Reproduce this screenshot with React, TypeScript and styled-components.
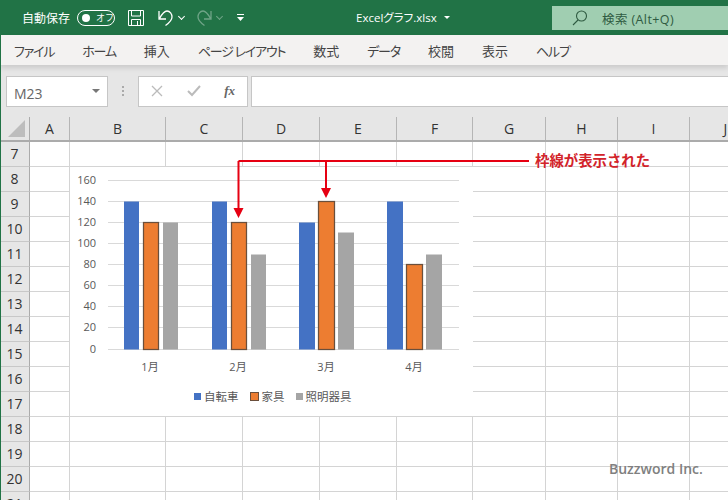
import React from "react";
import styled, { createGlobalStyle } from "styled-components";

const COLUMNS = [
  { label: "A", width: 40 },
  { label: "B", width: 96 },
  { label: "C", width: 77 },
  { label: "D", width: 77 },
  { label: "E", width: 77 },
  { label: "F", width: 76 },
  { label: "G", width: 73 },
  { label: "H", width: 72 },
  { label: "I", width: 72 },
  { label: "J", width: 72 },
];
const ROWS = [7, 8, 9, 10, 11, 12, 13, 14, 15, 16, 17, 18, 19, 20, 21];
const MENU = [
  { label: "ファイル", kana: true },
  { label: "ホーム", kana: true },
  { label: "挿入", kana: false },
  { label: "ページ レイアウト", kana: true },
  { label: "数式", kana: false },
  { label: "データ", kana: true },
  { label: "校閲", kana: false },
  { label: "表示", kana: false },
  { label: "ヘルプ", kana: true },
];

const SERIES = [
  { name: "自転車", color: "#4472c4", values: [140, 140, 120, 140], xs: [124, 212, 299, 387], w: [15, 15, 16, 16] },
  { name: "家具", color: "#ed7d31", values: [120, 120, 140, 80], xs: [143.5, 231.5, 318.5, 406.5], w: [15, 15, 16, 16], outlined: true },
  { name: "照明器具", color: "#a5a5a5", values: [120, 90, 110, 90], xs: [163, 251, 338, 426], w: [15, 15, 16, 16] },
];
const MONTHS = [
  { label: "1月", x: 150 },
  { label: "2月", x: 238 },
  { label: "3月", x: 326 },
  { label: "4月", x: 414 },
];
const TICKS = [160, 140, 120, 100, 80, 60, 40, 20, 0];
const CHART_LEFT = 70;
const CHART_TOP = 167;
const yFor = (v: number) => Math.floor(349 - v * 1.055);

const App = () => (
  <Page>
    <GlobalStyle />
    <TitleBar>
      <AutoSave>自動保存</AutoSave>
      <Toggle>
        <ToggleKnob />
        <ToggleLabel>オフ</ToggleLabel>
      </Toggle>
      <QuickIcon $width={16}>
        <svg width="16" height="16" viewBox="0 0 16 16" fill="none" stroke="#fff" strokeWidth="1">
          <path d="M0.500 0.500h15v15h-15z" />
          <path d="M3.500 0.500v5.500h9v-5.500M3.500 15.500v-6h9v6M9.500 11v4.500" />
        </svg>
      </QuickIcon>
      <QuickIcon $width={16} $left={14}>
        <svg width="16" height="18" viewBox="0 0 16 18" fill="none" stroke="#fff" strokeWidth="1.300">
          <path d="M1 2v8h7M1.500 9.500C4 5 6 2 9 2c3 0 5 3 5 6 0 3-3 6-6.500 8.500" />
        </svg>
      </QuickIcon>
      <Chevron $dim={false} />
      <QuickIcon $width={16} $left={12} $dim>
        <svg width="16" height="18" viewBox="0 0 16 18" fill="none" stroke="#fff" strokeWidth="1.300">
          <path d="M15 2v8H8M14.500 9.500C12 5 10 2 7 2 4 2 2 5 2 8c0 3 3 6 6.500 8.500" />
        </svg>
      </QuickIcon>
      <Chevron $dim />
      <QuickIcon $width={8} $left={15}>
        <svg width="8" height="8" viewBox="0 0 8 8" fill="#fff">
          <path d="M0 0h7v1H0zM0 3h7L3.500 7z" />
        </svg>
      </QuickIcon>
      <FileName>
        Excelグラフ.xlsx
        <Caret />
      </FileName>
      <SearchBox>
        <svg width="16" height="16" viewBox="0 0 16 16" fill="none" stroke="#2f5b41" strokeWidth="1.100">
          <circle cx="9.500" cy="6" r="5" />
          <path d="M6 10L1 15" />
        </svg>
        <SearchText>検索 (Alt+Q)</SearchText>
      </SearchBox>
    </TitleBar>

    <MenuBar>
      {MENU.map((item) => (
        <MenuItem key={item.label} $kana={item.kana}>
          {item.label}
        </MenuItem>
      ))}
    </MenuBar>

    <FormulaBar>
      <NameBox>
        <NameText>M23</NameText>
        <NameCaret />
      </NameBox>
      <Dots>
        <i />
        <i />
        <i />
      </Dots>
      <FormulaButtons>
        <svg width="12" height="12" viewBox="0 0 12 12" stroke="#bbb" strokeWidth="1.300">
          <path d="M1 1l10 10M11 1L1 11" />
        </svg>
        <svg width="14" height="12" viewBox="0 0 14 12" fill="none" stroke="#bbb" strokeWidth="2">
          <path d="M1 6l4 4 8-9" />
        </svg>
        <FxLabel>fx</FxLabel>
      </FormulaButtons>
      <FormulaInput />
    </FormulaBar>

    <ColumnHeader>
      <Corner>
        <svg width="17" height="17" viewBox="0 0 17 17">
          <path d="M17 0v17H0z" fill="#bdbdbd" />
        </svg>
      </Corner>
      {COLUMNS.map((col) => (
        <ColumnCell key={col.label} $width={col.width}>
          {col.label}
        </ColumnCell>
      ))}
    </ColumnHeader>

    <Sheet>
      {ROWS.map((row) => (
        <Row key={row}>
          <RowHeader>{row}</RowHeader>
          {COLUMNS.map((col) => (
            <Cell key={col.label} $width={col.width} />
          ))}
        </Row>
      ))}

      <ChartArea>
        <svg width="403" height="249" viewBox={`${CHART_LEFT} ${CHART_TOP} 403 249`}>
          {TICKS.map((t) => (
            <g key={t}>
              <line x1="108" x2="459" y1={yFor(t) + 0.5} y2={yFor(t) + 0.5} stroke="#d9d9d9" strokeWidth="1" />
              <ChartText x="96" y={yFor(t) + 4} textAnchor="end">
                {t}
              </ChartText>
            </g>
          ))}
          {SERIES.map((s) =>
            s.values.map((v, i) => (
              <rect
                key={i}
                x={s.xs[i]}
                y={yFor(v) + 0.5}
                width={s.w[i]}
                height={349 - yFor(v)}
                fill={s.color}
                stroke={s.outlined ? "#6a4f3c" : "none"}
                strokeWidth={s.outlined ? 1.25 : 0}
              />
            ))
          )}
          {MONTHS.map((m) => (
            <ChartText key={m.label} x={m.x} y="371" textAnchor="middle">
              {m.label}
            </ChartText>
          ))}
        </svg>
        <Legend>
          {SERIES.map((s) => (
            <LegendItem key={s.name}>
              <LegendSwatch $color={s.color} $outlined={!!s.outlined} />
              {s.name}
            </LegendItem>
          ))}
        </Legend>
      </ChartArea>

      <Callout width="728" height="100" viewBox="0 142 728 100">
        <path d="M238.500 161H529M238.500 161V208M326 161V188" fill="none" stroke="#e60012" strokeWidth="2" />
        <path d="M233.500 208h10l-5 10zM321 188h10l-5 10z" fill="#e60012" />
      </Callout>
      <CalloutText>枠線が表示された</CalloutText>
      <Watermark>Buzzword Inc.</Watermark>
    </Sheet>
  </Page>
);

export default App;

const GlobalStyle = createGlobalStyle`
  html, body {
    margin: 0;
    padding: 0;
    background: #fff;
    overflow: hidden;
  }
`;

const Page = styled.div`
  position: relative;
  width: 728px;
  height: 500px;
  overflow: hidden;
  font-family: "Open Sans", "Noto Sans CJK JP", sans-serif;
  color: #444;

  &::after {
    content: "";
    position: absolute;
    left: 0;
    top: 0;
    width: 1px;
    height: 100%;
    background: #217346;
  }
`;

const TitleBar = styled.div`
  height: 35px;
  background: #217346;
  color: #fff;
  display: flex;
  align-items: center;
  padding-left: 22px;
  box-sizing: border-box;
`;

const AutoSave = styled.span`
  font-family: "Noto Sans CJK JP", sans-serif;
  font-size: 12px;
  width: 55px;
`;

const Toggle = styled.div`
  width: 36px;
  height: 14px;
  border: 1px solid #fff;
  border-radius: 9px;
  display: flex;
  align-items: center;
  margin-right: 13px;
`;

const ToggleKnob = styled.span`
  width: 8px;
  height: 8px;
  border-radius: 50%;
  background: #fff;
  margin-left: 4px;
`;

const ToggleLabel = styled.span`
  font-family: "Noto Sans CJK JP", sans-serif;
  font-size: 9px;
  margin-left: 6px;
`;

const QuickIcon = styled.span<{ $width: number; $left?: number; $dim?: boolean }>`
  width: ${(p) => p.$width}px;
  margin-left: ${(p) => p.$left ?? 0}px;
  opacity: ${(p) => (p.$dim ? 0.35 : 1)};
  display: flex;
`;

const Chevron = styled.span<{ $dim: boolean }>`
  width: 4px;
  height: 4px;
  margin-left: 5px;
  margin-top: -3px;
  border-right: 1px solid #fff;
  border-bottom: 1px solid #fff;
  transform: rotate(45deg);
  opacity: ${(p) => (p.$dim ? 0.35 : 1)};
`;

const FileName = styled.div`
  position: absolute;
  left: 356px;
  top: 9px;
  font-size: 11.500px;
  font-feature-settings: "palt";
  line-height: 17px;
  display: flex;
  align-items: center;
`;

const Caret = styled.span`
  margin-left: 7px;
  border-left: 3px solid transparent;
  border-right: 3px solid transparent;
  border-top: 3px solid #fff;
`;

const SearchBox = styled.div`
  position: absolute;
  left: 552px;
  top: 6px;
  width: 176px;
  height: 24px;
  background: #a0ceb1;
  display: flex;
  align-items: center;
  padding-left: 20px;
  box-sizing: border-box;
`;

const SearchText = styled.span`
  margin-left: 14px;
  font-size: 12.500px;
  letter-spacing: 0.4px;
  color: #2f5b41;
`;

const MenuBar = styled.div`
  height: 30px;
  background: #f3f2f1;
  display: flex;
  align-items: center;
  padding-left: 14px;
  gap: 28px;
  font-family: "Noto Sans CJK JP", sans-serif;
  font-size: 13px;
  font-feature-settings: "palt";
  color: #444;
  box-shadow: 0 3px 5px rgba(0, 0, 0, 0.12);
  position: relative;
`;

const MenuItem = styled.span<{ $kana: boolean }>`
  white-space: nowrap;
  letter-spacing: ${(p) => (p.$kana ? "-1.2px" : "0")};
`;

const FormulaBar = styled.div`
  height: 52px;
  background: #e6e6e6;
  display: flex;
  align-items: center;
  padding: 0 0 0 6px;
  box-sizing: border-box;
`;

const NameBox = styled.div`
  width: 102px;
  height: 31px;
  background: #fff;
  border: 1px solid #c6c6c6;
  box-sizing: border-box;
  display: flex;
  align-items: center;
  justify-content: space-between;
  padding: 0 7px;
  font-size: 14px;
  color: #666;
`;

const NameText = styled.span`
  margin-top: 4px;
`;

const NameCaret = styled.span`
  border-left: 4px solid transparent;
  border-right: 4px solid transparent;
  border-top: 4px solid #777;
`;

const Dots = styled.div`
  width: 30px;
  display: flex;
  flex-direction: column;
  align-items: center;
  gap: 2px;

  i {
    width: 2px;
    height: 2px;
    background: #aaa;
  }
`;

const FormulaButtons = styled.div`
  width: 110px;
  height: 31px;
  background: #fff;
  border: 1px solid #c6c6c6;
  box-sizing: border-box;
  display: flex;
  align-items: center;
  justify-content: space-between;
  padding: 0 12px;
`;

const FxLabel = styled.span`
  font-family: "Liberation Serif", serif;
  font-style: italic;
  font-weight: bold;
  font-size: 13px;
  color: #666;
`;

const FormulaInput = styled.div`
  flex: 1;
  height: 31px;
  margin-left: 3px;
  background: #fff;
  border: 1px solid #c6c6c6;
  border-right: none;
  box-sizing: border-box;
`;

const ColumnHeader = styled.div`
  height: 23px;
  background: #e6e6e6;
  display: flex;
  border-bottom: 2px solid #ababab;
`;

const Corner = styled.div`
  width: 30px;
  flex: none;
  display: flex;
  align-items: flex-end;
  justify-content: flex-end;
  padding: 0 4px 3px 0;
  box-sizing: border-box;
  border-right: 1px solid #ababab;
`;

const ColumnCell = styled.div<{ $width: number }>`
  flex: none;
  width: ${(p) => p.$width}px;
  box-sizing: border-box;
  border-right: 1px solid #b5b5b5;
  display: flex;
  align-items: center;
  justify-content: center;
  font-size: 14px;
  color: #333;
`;

const Sheet = styled.div`
  position: relative;
`;

const Row = styled.div`
  display: flex;
  height: 25px;
`;

const RowHeader = styled.div`
  width: 30px;
  flex: none;
  box-sizing: border-box;
  background: #e6e6e6;
  border-right: 1px solid #ababab;
  border-bottom: 1px solid #c8c8c8;
  padding-bottom: 2px;
  display: flex;
  align-items: center;
  justify-content: center;
  font-size: 14px;
  color: #333;
`;

const Cell = styled.div<{ $width: number }>`
  flex: none;
  width: ${(p) => p.$width}px;
  box-sizing: border-box;
  border-right: 1px solid #d4d4d4;
  border-bottom: 1px solid #d4d4d4;
`;

const ChartArea = styled.div`
  position: absolute;
  left: 70px;
  top: 25px;
  width: 403px;
  height: 249px;
  background: #fff;
`;

const ChartText = styled.text`
  font-family: "Open Sans", "Noto Sans CJK JP", sans-serif;
  font-size: 11px;
  fill: #595959;
`;

const Legend = styled.div`
  position: absolute;
  left: 124px;
  top: 222px;
  display: flex;
  gap: 11px;
  font-family: "Noto Sans CJK JP", sans-serif;
  font-size: 11.500px;
  color: #595959;
  line-height: 15px;
`;

const LegendItem = styled.span`
  display: flex;
  align-items: center;
  gap: 3px;
`;

const LegendSwatch = styled.span<{ $color: string; $outlined: boolean }>`
  width: 7px;
  height: 7px;
  background: ${(p) => p.$color};
  border: ${(p) => (p.$outlined ? "1px solid #6a4f3c" : "none")};
`;

const Callout = styled.svg`
  position: absolute;
  left: 0;
  top: 0;
`;

const CalloutText = styled.div`
  position: absolute;
  left: 535px;
  top: 7px;
  font-family: "Noto Sans CJK JP", sans-serif;
  font-weight: bold;
  font-size: 14.400px;
  line-height: 22px;
  color: #d2232a;
  white-space: nowrap;
`;

const Watermark = styled.div`
  position: absolute;
  left: 609px;
  top: 317px;
  font-size: 14px;
  font-weight: 600;
  line-height: 20px;
  color: #808080;
  white-space: nowrap;
`;
